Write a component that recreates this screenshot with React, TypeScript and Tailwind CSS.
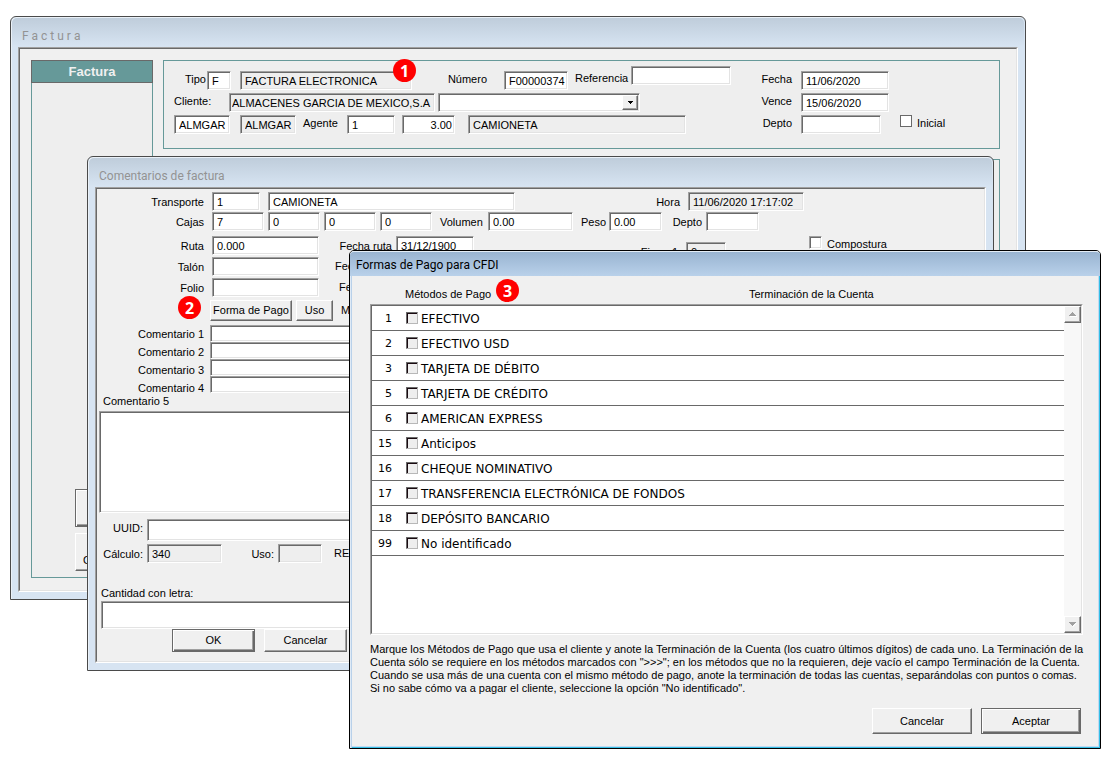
import type { InputHTMLAttributes, ReactNode } from "react";
import { twMerge } from "tailwind-merge";

const SUNKEN =
  "border border-t-[#a0a0a0] border-l-[#a0a0a0] border-r-white border-b-white shadow-[inset_1px_1px_#696969,inset_-1px_-1px_#e3e3e3]";
const RAISED =
  "border border-t-white border-l-white border-r-[#696969] border-b-[#696969] shadow-[inset_-1px_-1px_#a0a0a0]";
const RAISED_DEFAULT =
  "border border-[#696969] shadow-[inset_1px_1px_#ffffff,inset_-1px_-1px_#696969,inset_-2px_-2px_#a0a0a0]";

type FieldProps = InputHTMLAttributes<HTMLInputElement> & { locked?: boolean };

/** Caja de texto hundida; locked = gris, solo lectura. */
function Field({ locked = false, className, ...rest }: FieldProps) {
  return (
    <input
      type="text"
      readOnly={locked}
      className={twMerge(
        "h-[19px] shrink-0 rounded-none pl-1 pt-px outline-none",
        locked ? "bg-[#eeeeee]" : "bg-white",
        SUNKEN,
        className,
      )}
      {...rest}
    />
  );
}

function Label({
  id,
  className,
  children,
}: {
  id: string;
  className?: string;
  children: ReactNode;
}) {
  return (
    <label
      htmlFor={id}
      className={twMerge("shrink-0 whitespace-nowrap leading-4", className)}
    >
      {children}
    </label>
  );
}

function Button({
  isDefault = false,
  className,
  children,
}: {
  isDefault?: boolean;
  className?: string;
  children?: ReactNode;
}) {
  return (
    <button
      type="button"
      className={twMerge(
        "shrink-0 whitespace-nowrap bg-[#f0f0f0] text-center",
        isDefault ? RAISED_DEFAULT : RAISED,
        className,
      )}
    >
      {children}
    </button>
  );
}

function Badge({ n, className }: { n: number; className: string }) {
  return (
    <span
      className={twMerge(
        "absolute z-10 flex size-[23px] items-center justify-center rounded-full bg-[#ff0000] font-['Open_Sans',sans-serif] text-[16px] font-bold leading-none text-white",
        className,
      )}
    >
      {n}
    </span>
  );
}

/** Ventana inactiva con marco azul claro. */
function InactiveWindow({
  title,
  className,
  children,
}: {
  title: string;
  className: string;
  children: ReactNode;
}) {
  return (
    <section
      className={twMerge(
        "absolute rounded-t-[6px] border border-[#4a4a4a] bg-[#d7e4f2] px-[7px] pb-[7px] shadow-[inset_1px_1px_#eaf1f8]",
        className,
      )}
    >
      <h2 className="-mx-[6px] mt-px h-[29px] rounded-t-[5px] bg-linear-to-b from-[#bfcddb] to-[#d7e4f2] pl-[10px] font-['Roboto',sans-serif] text-[12px] leading-9 text-[#939393]">
        {title}
      </h2>
      <div className="border border-t-[#a0a0a0] border-l-[#a0a0a0] border-r-white border-b-white bg-[#f0f0f0]">
        <div className="border border-t-[#696969] border-l-[#696969] border-r-[#e3e3e3] border-b-[#e3e3e3]">
          {children}
        </div>
      </div>
    </section>
  );
}

function FacturaWindow() {
  return (
    <InactiveWindow
      title="F a c t u r a"
      className="left-[10px] right-[88px] top-4"
    >
      <Badge n={1} className="left-[382px] top-[42px]" />
      <div className="flex gap-[10px] pb-3 pl-[11px] pr-4 pt-[11px]">
        <aside className="flex w-[122px] shrink-0 flex-col">
          <h3 className="h-[23px] border border-[#696969] bg-[#669999] text-center text-[13px] font-bold leading-[21px] text-[#f0f0f0]">
            Factura
          </h3>
          <div className="flex min-h-[495px] flex-col items-start justify-end gap-[6px] border border-t-0 border-[#669999] bg-[#eeeeee] pb-[6px] pl-[43px]">
            <Button isDefault className="h-[38px] w-[66px]" />
            <Button className="h-[38px] w-[66px] pl-[7px] pt-4 text-left">
              C
            </Button>
          </div>
        </aside>

        <div className="flex min-w-0 flex-1 flex-col gap-[10px]">
          <form className="flex border border-[#669999] bg-[#eeeeee] pb-[14px] pl-[10px] pt-[5px]">
            <div className="flex w-[557px] shrink-0 flex-col gap-[3px]">
              <div className="flex items-end">
                <Label id="tipo" className="h-[19px] w-8 text-right">
                  Tipo
                </Label>
                <Field id="tipo" defaultValue="F" className="ml-px w-6" />
                <Field
                  locked
                  aria-label="Descripción del tipo"
                  defaultValue="FACTURA ELECTRONICA"
                  className="ml-[9px] w-[172px]"
                />
                <Label id="numero" className="h-[19px] w-[75px] text-right">
                  Número
                </Label>
                <Field
                  id="numero"
                  defaultValue="F00000374"
                  className="ml-[17px] w-16"
                />
                <div className="ml-[7px] flex h-6 flex-1">
                  <Label id="referencia" className="w-14 leading-6">
                    Referencia
                  </Label>
                  <Field id="referencia" className="w-[100px]" />
                </div>
              </div>

              <div className="flex items-start">
                <Label id="cliente" className="w-[55px]">
                  Cliente:
                </Label>
                <Field
                  locked
                  id="cliente"
                  defaultValue="ALMACENES GARCIA DE MEXICO,S.A"
                  className="w-[206px] pl-[2px]"
                />
                <div className="relative ml-[3px]">
                  <select
                    aria-label="Domicilio de entrega"
                    className={twMerge(
                      "h-[19px] w-[202px] appearance-none rounded-none bg-white px-1 outline-none",
                      SUNKEN,
                    )}
                  >
                    <option></option>
                  </select>
                  <span
                    className={twMerge(
                      "pointer-events-none absolute right-[2px] top-[2px] flex h-[15px] w-4 items-center justify-center bg-[#f0f0f0]",
                      RAISED,
                    )}
                  >
                    <svg width="5" height="3" viewBox="0 0 5 3">
                      <path d="M0 0h5v1h-1v1h-1v1h-1v-1h-1v-1h-1z" />
                    </svg>
                  </span>
                </div>
              </div>

              <div className="flex items-start">
                <Field
                  aria-label="Clave de cliente"
                  defaultValue="ALMGAR"
                  className="w-14"
                />
                <Field
                  locked
                  aria-label="Clave fiscal"
                  defaultValue="ALMGAR"
                  className="ml-[10px] w-14"
                />
                <Label id="agente" className="ml-[7px] w-11">
                  Agente
                </Label>
                <Field id="agente" defaultValue="1" className="w-12" />
                <Field
                  aria-label="Comisión"
                  defaultValue="3.00"
                  className="ml-[7px] w-[53px] pr-[2px] text-right"
                />
                <Field
                  locked
                  aria-label="Nombre del agente"
                  defaultValue="CAMIONETA"
                  className="ml-[13px] w-[218px]"
                />
              </div>
            </div>

            <div className="grid grid-cols-[61px_auto] content-start gap-x-[9px] gap-y-[3px] pt-[5px]">
              <Label id="fecha" className="text-right">
                Fecha
              </Label>
              <Field id="fecha" defaultValue="11/06/2020" className="w-[88px]" />
              <Label id="vence" className="text-right">
                Vence
              </Label>
              <Field id="vence" defaultValue="15/06/2020" className="w-[88px]" />
              <Label id="depto" className="text-right">
                Depto
              </Label>
              <div className="flex items-start">
                <Field id="depto" className="w-20" />
                <input
                  id="inicial"
                  type="checkbox"
                  className="ml-[19px] size-3 shrink-0 appearance-none border border-[#696969] bg-white"
                />
                <Label id="inicial" className="ml-[5px]">
                  Inicial
                </Label>
              </div>
            </div>
          </form>

          <div className="flex-1 border border-[#669999] bg-[#eeeeee]" />
        </div>
      </div>
    </InactiveWindow>
  );
}

const COMENTARIOS = [1, 2, 3, 4];

function ComentariosWindow() {
  return (
    <InactiveWindow
      title="Comentarios de factura"
      className="left-[87px] right-[120px] top-[156px]"
    >
      <Badge n={2} className="left-[90px] top-[139px]" />
      <form className="pb-[9px] pt-[3px]">
        <div className="flex items-center gap-2">
          <Label id="transporte" className="w-[107px] text-right">
            Transporte
          </Label>
          <Field id="transporte" defaultValue="1" className="w-12" />
          <Field
            aria-label="Nombre del transporte"
            defaultValue="CAMIONETA"
            className="w-[247px]"
          />
          <Label id="hora" className="w-[157px] text-right">
            Hora
          </Label>
          <Field
            locked
            id="hora"
            defaultValue="11/06/2020 17:17:02"
            className="w-[116px]"
          />
        </div>

        <div className="mt-px flex items-center gap-2">
          <Label id="cajas" className="w-[107px] text-right">
            Cajas
          </Label>
          <div className="flex gap-1">
            <Field id="cajas" defaultValue="7" className="w-[52px]" />
            <Field aria-label="Cajas 2" defaultValue="0" className="w-[52px]" />
            <Field aria-label="Cajas 3" defaultValue="0" className="w-[52px]" />
            <Field aria-label="Cajas 4" defaultValue="0" className="w-[52px]" />
          </div>
          <Label id="volumen" className="w-10 text-center">
            Volumen
          </Label>
          <Field id="volumen" defaultValue="0.00" className="w-[85px]" />
          <div className="flex items-center gap-1">
            <Label id="peso" className="w-6">
              Peso
            </Label>
            <Field id="peso" defaultValue="0.00" className="w-[53px]" />
          </div>
          <div className="flex items-center gap-1">
            <Label id="depto2" className="w-8 text-right">
              Depto
            </Label>
            <Field id="depto2" className="w-[53px]" />
          </div>
        </div>

        <div className="mt-[5px] flex items-start">
          <div className="flex flex-col gap-[2px]">
            <div className="flex items-center">
              <Label id="ruta" className="w-[107px] text-right">
                Ruta
              </Label>
              <Field id="ruta" defaultValue="0.000" className="ml-2 w-[107px]" />
              <Label id="fechaRuta" className="w-[73px] text-right">
                Fecha ruta
              </Label>
              <Field
                id="fechaRuta"
                defaultValue="31/12/1900"
                className="ml-1 w-[78px]"
              />
            </div>
            <div className="flex items-center">
              <Label id="talon" className="w-[107px] text-right">
                Talón
              </Label>
              <Field id="talon" className="ml-2 w-[107px]" />
              <span className="pl-4">Fec</span>
            </div>
            <div className="flex items-center">
              <Label id="folio" className="w-[107px] text-right">
                Folio
              </Label>
              <Field id="folio" className="ml-2 w-[107px]" />
              <span className="pl-5">Fe</span>
            </div>
          </div>
          <div className="flex w-[252px] items-center justify-end gap-2 pt-[6px]">
            <Label id="firma">Firma 1</Label>
            <Field locked id="firma" defaultValue="0" className="w-10" />
          </div>
          <div className="flex pl-[83px]">
            <input
              id="compostura"
              type="checkbox"
              className={twMerge(
                "size-[13px] shrink-0 appearance-none bg-white",
                SUNKEN,
              )}
            />
            <Label id="compostura" className="ml-[5px]">
              Compostura
            </Label>
          </div>
        </div>

        <div className="mt-[3px] flex items-center gap-1 pl-[113px]">
          <Button className="h-[21px] w-[82px]">Forma de Pago</Button>
          <Button className="h-[21px] w-[37px]">Uso</Button>
          <span className="pl-1">M</span>
        </div>

        <div className="mt-1 flex h-[68px] gap-[6px]">
          <div className="flex w-[107px] flex-col text-right">
            {COMENTARIOS.map((n) => (
              <Label key={n} id={`comentario${n}`} className="leading-[18px]">
                Comentario {n}
              </Label>
            ))}
          </div>
          <div className="flex flex-1 flex-col">
            {COMENTARIOS.map((n) => (
              <Field key={n} id={`comentario${n}`} className="h-[17px]" />
            ))}
          </div>
        </div>

        <div className="flex flex-col gap-[2px] px-[2px]">
          <Label id="comentario5" className="pl-1">
            Comentario 5
          </Label>
          <textarea
            id="comentario5"
            className={twMerge(
              "h-[102px] resize-none rounded-none bg-white outline-none",
              SUNKEN,
            )}
          />
        </div>

        <div className="mt-[6px] flex items-start gap-1">
          <Label id="uuid" className="w-[46px] pt-px text-right">
            UUID:
          </Label>
          <Field id="uuid" className="h-[22px] min-w-0 flex-1 shrink" />
        </div>
        <div className="mt-[3px] flex items-center gap-1">
          <Label id="calculo" className="w-[46px] text-right">
            Cálculo:
          </Label>
          <Field
            locked
            id="calculo"
            defaultValue="340"
            className="w-[75px]"
          />
          <Label id="uso" className="w-12 text-right">
            Uso:
          </Label>
          <Field locked id="uso" className="w-11" />
          <span className="pl-2">RE</span>
        </div>

        <div className="mt-[22px] flex flex-col px-1">
          <Label id="letra">Cantidad con letra:</Label>
          <Field id="letra" className="h-[28px]" />
        </div>
        <div className="flex gap-[9px] pl-[75px]">
          <Button isDefault className="h-[23px] w-[83px]">
            OK
          </Button>
          <Button className="h-[23px] w-[83px]">Cancelar</Button>
        </div>
      </form>
    </InactiveWindow>
  );
}

const METODOS = [
  { clave: 1, nombre: "EFECTIVO" },
  { clave: 2, nombre: "EFECTIVO USD" },
  { clave: 3, nombre: "TARJETA DE DÉBITO" },
  { clave: 5, nombre: "TARJETA DE CRÉDITO" },
  { clave: 6, nombre: "AMERICAN EXPRESS" },
  { clave: 15, nombre: "Anticipos" },
  { clave: 16, nombre: "CHEQUE NOMINATIVO" },
  { clave: 17, nombre: "TRANSFERENCIA ELECTRÓNICA DE FONDOS" },
  { clave: 18, nombre: "DEPÓSITO BANCARIO" },
  { clave: 99, nombre: "No identificado" },
];

function ScrollBar() {
  return (
    <div className="flex w-[17px] shrink-0 flex-col justify-between bg-[#f8f8f8]">
      <Button className="flex h-[17px] items-center justify-center">
        <svg width="8" height="5" viewBox="0 0 8 5">
          <path d="M1 5h7v-1h-7z" fill="#ffffff" />
          <path d="M0 4h7v-1h-1v-1h-1v-1h-1v-1h-1v1h-1v1h-1v1h-1z" fill="#a0a0a0" />
        </svg>
      </Button>
      <Button className="flex h-[17px] items-center justify-center">
        <svg width="8" height="5" viewBox="0 0 8 5">
          <path d="M4 5l4-4h-1l-4 3z" fill="#ffffff" />
          <path d="M0 0h7v1h-1v1h-1v1h-1v1h-1v-1h-1v-1h-1v-1h-1z" fill="#a0a0a0" />
        </svg>
      </Button>
    </div>
  );
}

function FormasPagoWindow() {
  return (
    <section className="absolute left-[349px] right-[13px] top-[250px] rounded-t-[5px] border border-black bg-[#f0f0f0] shadow-[inset_1px_0_#dfeaf6,inset_2px_0_#b9d1ea,inset_-1px_-1px_#35bfe6,inset_-2px_-2px_#c3d9f0]">
      <h2 className="h-[25px] rounded-t-[4px] border-t border-[#e4edf6] bg-linear-to-b from-[#99b4d1] to-[#b9d1ea] pl-[6px] font-['Roboto',sans-serif] text-[12px] leading-[26px] text-black">
        Formas de Pago para CFDI
      </h2>
      <Badge n={3} className="left-[146px] top-[28px]" />
      <div className="pb-[14px] pl-5 pr-[17px]">
        <div className="flex h-7 items-center pl-[35px] pt-2">
          <span className="w-[344px]">Métodos de Pago</span>
          <span>Terminación de la Cuenta</span>
        </div>

        <div className="border border-t-[#a0a0a0] border-l-[#a0a0a0] border-r-white border-b-white bg-white">
          <div className="flex h-[329px] border border-t-[#696969] border-l-[#696969] border-r-[#e3e3e3] border-b-[#e3e3e3]">
            <div className="min-w-0 flex-1">
              <table className="w-full border-separate border-spacing-0 font-['DejaVu_Sans',sans-serif] text-[12px]">
                <tbody>
                  {METODOS.map((m) => (
                    <tr key={m.clave} className="h-[25px]">
                      <td className="w-5 border-b border-[#696969] p-0 pt-[2px] text-right text-[11px]">
                        {m.clave}
                      </td>
                      <td className="w-[343px] border-b border-[#696969] p-0 pl-[14px]">
                        <div className="flex items-center gap-[3px]">
                          <input
                            id={`metodo${m.clave}`}
                            type="checkbox"
                            className="size-3 shrink-0 appearance-none border border-t-[#696969] border-l-[#696969] border-r-[#b8b8b8] border-b-[#b8b8b8] bg-[#eeeeee] shadow-[inset_1px_1px_#1a0a10]"
                          />
                          <Label id={`metodo${m.clave}`} className="leading-[18px] pt-px">
                            {m.nombre}
                          </Label>
                        </div>
                      </td>
                      <td className="border-b border-[#696969] p-0" />
                    </tr>
                  ))}
                </tbody>
              </table>
            </div>
            <ScrollBar />
          </div>
        </div>

        <p className="mt-2 whitespace-nowrap leading-[13px]">
          Marque los Métodos de Pago que usa el cliente y anote la Terminación
          de la Cuenta (los cuatro últimos dígitos) de cada uno. La Terminación
          de la
          <br />
          Cuenta sólo se requiere en los métodos marcados con "&gt;&gt;&gt;"; en
          los métodos que no la requieren, deje vacío el campo Terminación de la
          Cuenta.
          <br />
          Cuando se usa más de una cuenta con el mismo método de pago, anote la
          terminación de todas las cuentas, separándolas con puntos o comas.
          <br />
          Si no sabe cómo va a pagar el cliente, seleccione la opción "No
          identificado".
        </p>

        <div className="mt-[13px] flex justify-end gap-[9px] pr-[2px]">
          <Button className="h-[26px] w-[100px]">Cancelar</Button>
          <Button isDefault className="h-[26px] w-[100px]">
            Aceptar
          </Button>
        </div>
      </div>
    </section>
  );
}

export default function App() {
  return (
    <main className="relative min-h-screen w-full overflow-hidden bg-white font-['Liberation_Sans',Arial,sans-serif] text-[11px] text-black">
      <FacturaWindow />
      <ComentariosWindow />
      <FormasPagoWindow />
    </main>
  );
}
